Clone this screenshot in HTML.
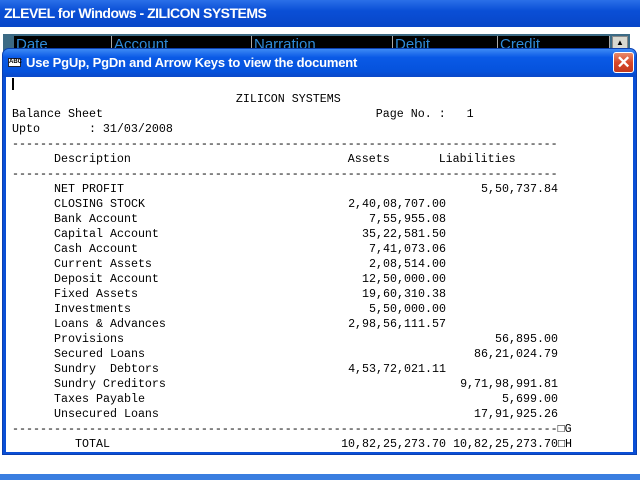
<!DOCTYPE html>
<html><head><style>
*{margin:0;padding:0;box-sizing:border-box}
body{width:640px;height:480px;overflow:hidden;background:#fff;position:relative;font-family:"Liberation Sans",sans-serif}
.tb{position:absolute;left:0;top:0;width:640px;height:27px;background:linear-gradient(#2a6fe8,#0a4fd6 40%,#0846c8);color:#fff;font-weight:bold;font-size:14px;line-height:27px;padding-left:4px;letter-spacing:-0.5px}
.grid{position:absolute;left:3px;top:34px;width:627px;height:20px;background:#3c6a84}
.cell{position:absolute;top:2px;height:18px;background:#000;color:#2f8ad6;font-size:15px;line-height:18px;padding-left:2px;border-right:1px solid #aaa}
.sb{position:absolute;left:609px;top:2px;width:16px;height:14px;background:#d8d8d0;border:1px solid #888;font-size:8px;text-align:center;line-height:12px}
.dlg{position:absolute;left:2px;top:48px;width:635px;height:407px;background:#0a4fd6;border-radius:7px 7px 0 0;border:1px solid #0b3fb0}
.dt{position:absolute;left:0;top:0;width:633px;height:28px;border-radius:6px 6px 0 0;background:linear-gradient(#3d8af5,#0a5ae6 30%,#0552dc 80%,#0a48c8);color:#fff;font-weight:bold;font-size:13px;line-height:28px;padding-left:23px;letter-spacing:-0.2px}
.ic{position:absolute;left:5px;top:9px;width:13px;height:9px;background:#fff;border:1px solid #223;font-size:6px;line-height:7px;color:#000;text-align:center;font-weight:bold;letter-spacing:0}
.x{position:absolute;left:610px;top:3px;width:21px;height:21px;border-radius:3px;border:1px solid #fff;background:linear-gradient(#e88a6a,#d8482a 50%,#c23a20);color:#fff;font-size:17px;line-height:19px;text-align:center;font-weight:bold}
.cl{position:absolute;left:3px;top:28px;width:627px;height:375px;background:#fff}
.bot{position:absolute;left:0;top:474px;width:640px;height:6px;background:#3a7ee0}
.m{position:absolute;font-family:"Liberation Mono",monospace;font-size:11.67px;white-space:pre;line-height:15px;color:#000}
.r{position:absolute;left:0;width:640px;height:15px;font-family:"Liberation Mono",monospace;font-size:11.67px;white-space:pre;line-height:15px}
.r .d{position:absolute;left:54px}
.r .a{position:absolute;right:194px}
.r .l{position:absolute;right:82px}
.cur{position:absolute;left:12px;top:78px;width:2px;height:12px;background:#000}
</style></head><body>
<div class="tb">ZLEVEL for Windows - ZILICON SYSTEMS</div>
<div class="grid">
<div class="cell" style="left:11px;width:98px">Date</div>
<div class="cell" style="left:109px;width:140px">Account</div>
<div class="cell" style="left:249px;width:141px">Narration</div>
<div class="cell" style="left:390px;width:105px">Debit</div>
<div class="cell" style="left:495px;width:112px">Credit</div>
<div class="sb">▲</div>
</div>
<div class="dlg">
<div class="dt"><div class="ic">ABC</div>Use PgUp, PgDn and Arrow Keys to view the document<div class="x">✕</div></div>
<div class="cl"></div>
</div>
<div class="cur"></div>
<div class="m" style="left:12px;top:92px">                                ZILICON SYSTEMS
Balance Sheet                                       Page No. :   1
Upto       : 31/03/2008
------------------------------------------------------------------------------
      Description                               Assets       Liabilities
------------------------------------------------------------------------------</div>
<div class="r" style="top:182px"><span class="d">NET PROFIT</span><span class="l">5,50,737.84</span></div>
<div class="r" style="top:197px"><span class="d">CLOSING STOCK</span><span class="a">2,40,08,707.00</span></div>
<div class="r" style="top:212px"><span class="d">Bank Account</span><span class="a">7,55,955.08</span></div>
<div class="r" style="top:227px"><span class="d">Capital Account</span><span class="a">35,22,581.50</span></div>
<div class="r" style="top:242px"><span class="d">Cash Account</span><span class="a">7,41,073.06</span></div>
<div class="r" style="top:257px"><span class="d">Current Assets</span><span class="a">2,08,514.00</span></div>
<div class="r" style="top:272px"><span class="d">Deposit Account</span><span class="a">12,50,000.00</span></div>
<div class="r" style="top:287px"><span class="d">Fixed Assets</span><span class="a">19,60,310.38</span></div>
<div class="r" style="top:302px"><span class="d">Investments</span><span class="a">5,50,000.00</span></div>
<div class="r" style="top:317px"><span class="d">Loans &amp; Advances</span><span class="a">2,98,56,111.57</span></div>
<div class="r" style="top:332px"><span class="d">Provisions</span><span class="l">56,895.00</span></div>
<div class="r" style="top:347px"><span class="d">Secured Loans</span><span class="l">86,21,024.79</span></div>
<div class="r" style="top:362px"><span class="d">Sundry  Debtors</span><span class="a">4,53,72,021.11</span></div>
<div class="r" style="top:377px"><span class="d">Sundry Creditors</span><span class="l">9,71,98,991.81</span></div>
<div class="r" style="top:392px"><span class="d">Taxes Payable</span><span class="l">5,699.00</span></div>
<div class="r" style="top:407px"><span class="d">Unsecured Loans</span><span class="l">17,91,925.26</span></div>
<div class="m" style="left:12px;top:422px">------------------------------------------------------------------------------□G</div>
<div class="r" style="top:437px"><span class="d" style="left:75px">TOTAL</span><span class="a">10,82,25,273.70</span><span class="l">10,82,25,273.70</span><span style="position:absolute;left:558px">□H</span></div>
<div class="bot"></div>
</body></html>
